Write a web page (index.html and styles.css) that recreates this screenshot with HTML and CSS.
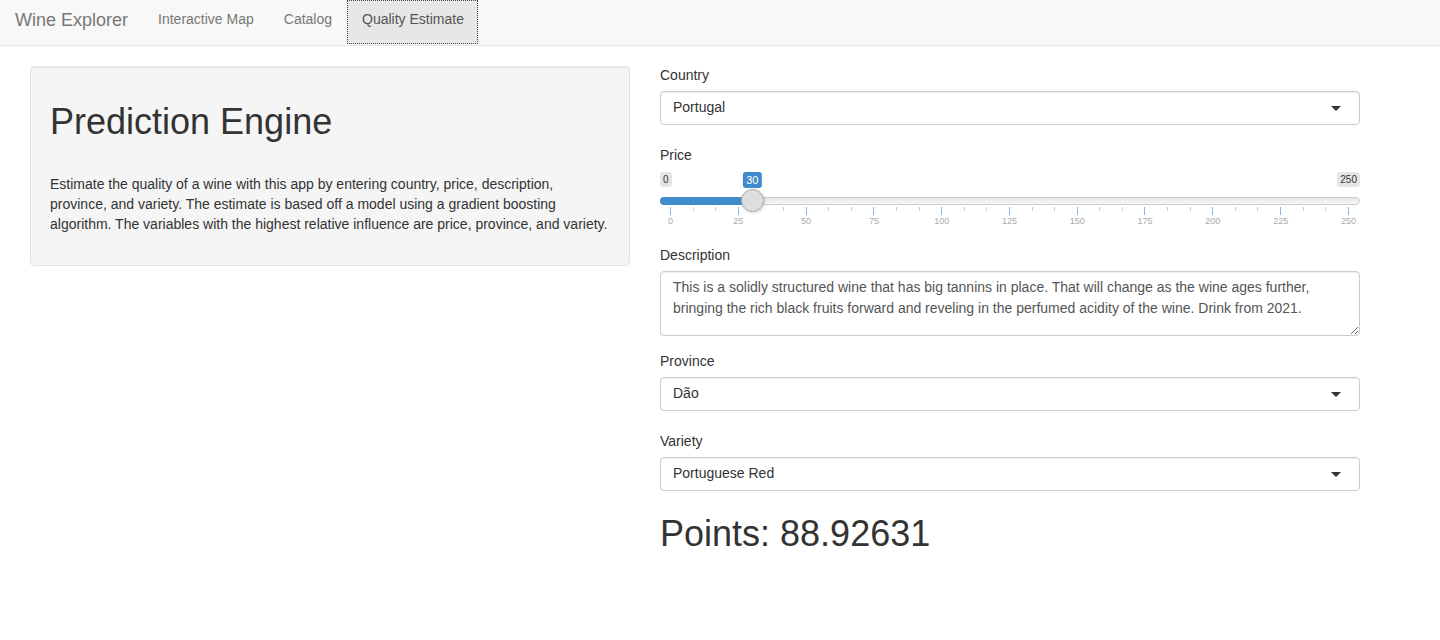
FILE: index.html
```html
<!DOCTYPE html>
<html lang="en">
<head>
<meta charset="utf-8">
<title>Wine Explorer</title>
<link rel="stylesheet" href="styles.css">
</head>
<body>
<nav class="navbar">
  <span class="brand">Wine Explorer</span>
  <ul class="nav">
    <li><a class="nav-link">Interactive Map</a></li>
    <li><a class="nav-link">Catalog</a></li>
    <li><a class="nav-link active">Quality Estimate</a></li>
  </ul>
</nav>
<main class="page">
  <section class="left">
    <div class="well">
      <h1 class="well-title">Prediction Engine</h1>
      <p class="well-text">Estimate the quality of a wine with this app by entering country, price, description, province, and variety. The estimate is based off a model using a gradient boosting algorithm. The variables with the highest relative influence are price, province, and variety.</p>
    </div>
  </section>
  <section class="right">
    <div class="form-group">
      <label class="control-label">Country</label>
      <div class="select"><span>Portugal</span><i class="caret"></i></div>
    </div>
    <div class="form-group">
      <label class="control-label">Price</label>
      <div class="irs">
        <span class="irs-min">0</span>
        <span class="irs-max">250</span>
        <span class="irs-line"></span>
        <span class="irs-bar" style="--p:0.12"></span>
        <span class="irs-single" style="--p:0.12">30</span>
        <span class="irs-handle" style="--p:0.12"></span>
        <div class="irs-grid">
          <div class="ticks">
            <i class="t major"></i><i class="t"></i><i class="t"></i>
            <i class="t major"></i><i class="t"></i><i class="t"></i>
            <i class="t major"></i><i class="t"></i><i class="t"></i>
            <i class="t major"></i><i class="t"></i><i class="t"></i>
            <i class="t major"></i><i class="t"></i><i class="t"></i>
            <i class="t major"></i><i class="t"></i><i class="t"></i>
            <i class="t major"></i><i class="t"></i><i class="t"></i>
            <i class="t major"></i><i class="t"></i><i class="t"></i>
            <i class="t major"></i><i class="t"></i><i class="t"></i>
            <i class="t major"></i><i class="t"></i><i class="t"></i>
            <i class="t major"></i>
          </div>
          <div class="grid-labels">
            <span class="gl"><span>0</span></span>
            <span class="gl"><span>25</span></span>
            <span class="gl"><span>50</span></span>
            <span class="gl"><span>75</span></span>
            <span class="gl"><span>100</span></span>
            <span class="gl"><span>125</span></span>
            <span class="gl"><span>150</span></span>
            <span class="gl"><span>175</span></span>
            <span class="gl"><span>200</span></span>
            <span class="gl"><span>225</span></span>
            <span class="gl"><span>250</span></span>
          </div>
        </div>
      </div>
    </div>
    <div class="form-group fg-text">
      <label class="control-label">Description</label>
      <textarea class="textarea">This is a solidly structured wine that has big tannins in place. That will change as the wine ages further, bringing the rich black fruits forward and reveling in the perfumed acidity of the wine. Drink from 2021.</textarea>
    </div>
    <div class="form-group">
      <label class="control-label">Province</label>
      <div class="select"><span>Dão</span><i class="caret"></i></div>
    </div>
    <div class="form-group">
      <label class="control-label">Variety</label>
      <div class="select"><span>Portuguese Red</span><i class="caret"></i></div>
    </div>
    <h1 class="points">Points: 88.92631</h1>
  </section>
</main>
</body>
</html>
```

FILE: styles.css
```css
* { box-sizing: border-box; }
html, body { margin: 0; padding: 0; }
body {
  font-family: "Liberation Sans", Arial, Helvetica, sans-serif;
  font-size: 14px;
  line-height: 20px;
  color: #333;
  background: #fff;
}

/* navbar */
.navbar {
  display: flex;
  align-items: flex-start;
  height: 46px;
  background: #f8f8f8;
  border-bottom: 1px solid #e7e7e7;
}
.brand {
  font-size: 18px;
  line-height: 20px;
  color: #777;
  padding: 10px 15px 15px 15px;
}
.nav {
  display: flex;
  list-style: none;
  margin: 0;
  padding: 0;
}
.nav-link {
  display: block;
  height: 45px;
  padding: 9px 15px 16px 15px;
  color: #777;
  text-decoration: none;
}
.nav-link.active {
  background: #e7e7e7;
  color: #555;
  outline: 1px dotted #444;
  outline-offset: -1px;
  height: 44px;
  padding-right: 14px;
}

/* layout */
.page {
  display: flex;
  align-items: flex-start;
  padding: 19px 0 0 30px;
  gap: 30px;
}
.left { width: 600px; flex: none; padding-top: 1px; }
.right { width: 700px; flex: none; }

/* well */
.well {
  background: #f5f5f5;
  border: 1px solid #e3e3e3;
  border-radius: 4px;
  box-shadow: inset 0 1px 1px rgba(0,0,0,0.05);
  padding: 19px;
}
.well-title {
  font-size: 36px;
  font-weight: 500;
  line-height: 1.1;
  margin: 16px 0 0 0;
}
.well-title, .points { font-family: "Liberation Sans", Arial, sans-serif; }
.well-text {
  margin: 32px 0 12px 0;
}

/* form */
.form-group { margin-bottom: 20px; }
.fg-text { margin-bottom: 15px; }
.control-label {
  display: block;
  font-weight: 400;
  margin-bottom: 6px;
}
.select {
  position: relative;
  height: 34px;
  border: 1px solid #ccc;
  border-radius: 4px;
  padding: 5px 12px 7px 12px;
  background: #fff;
  box-shadow: inset 0 1px 1px rgba(0,0,0,0.075);
  color: #333;
}
.caret {
  position: absolute;
  right: 18px;
  top: 14px;
  width: 0;
  height: 0;
  border-style: solid;
  border-width: 5px 5px 0 5px;
  border-color: #333 transparent transparent transparent;
}
.textarea {
  display: block;
  width: 100%;
  height: 65px;
  margin-top: 1px;
  border: 1px solid #ccc;
  border-radius: 4px;
  padding: 5px 12px;
  font-family: "Liberation Sans", Arial, sans-serif;
  font-size: 14px;
  line-height: 21px;
  color: #555;
  resize: vertical;
  box-shadow: inset 0 1px 1px rgba(0,0,0,0.075);
  overflow: hidden;
}

/* slider */
.irs {
  position: relative;
  height: 54px;
  font-family: "Liberation Sans", Arial, sans-serif;
}
.irs-min, .irs-max {
  position: absolute;
  top: 1px;
  font-size: 10px;
  line-height: 13px;
  padding: 1px 3px;
  border-radius: 3px;
  background: rgba(0,0,0,0.1);
  color: #333;
}
.irs-min { left: 0; }
.irs-max { right: 0; }
.irs-line {
  position: absolute;
  left: 0;
  right: 0;
  top: 26px;
  height: 8px;
  border: 1px solid #ccc;
  border-radius: 16px;
  background: linear-gradient(to bottom, #dedede -50%, #fff 150%);
}
.irs-bar {
  position: absolute;
  left: 0;
  top: 26px;
  height: 8px;
  width: calc(11px + (100% - 22px) * var(--p));
  background: #428bca;
  border-radius: 16px 0 0 16px;
}
.irs-single {
  position: absolute;
  top: 1px;
  left: calc(11px + (100% - 22px) * var(--p));
  transform: translateX(-50%);
  font-size: 11px;
  line-height: 14px;
  padding: 1px 3px;
  border-radius: 3px;
  background: #428bca;
  color: #fff;
}
.irs-handle {
  position: absolute;
  top: 18px;
  left: calc(11px + (100% - 22px) * var(--p));
  width: 23px;
  height: 23px;
  margin-left: -11.5px;
  border-radius: 50%;
  background: #dedede;
  border: 1px solid #ababab;
  box-shadow: 1px 1px 3px rgba(0,0,0,0.15);
}
.irs-grid {
  position: absolute;
  left: 10px;
  right: 11px;
  top: 36px;
}
.ticks {
  display: flex;
  justify-content: space-between;
  align-items: flex-start;
  height: 8px;
}
.t {
  display: block;
  width: 1px;
  height: 4px;
  background: #ccc;
}
.t.major {
  height: 8px;
  background: #8db6de;
}
.grid-labels {
  display: flex;
  justify-content: space-between;
  margin-top: 1px;
}
.gl {
  width: 1px;
  display: flex;
  justify-content: center;
  font-size: 9px;
  line-height: 11px;
  color: #a9a9a9;
  white-space: nowrap;
}

.points {
  font-size: 36px;
  font-weight: 500;
  line-height: 1.1;
  margin: 23px 0 10px 0;
}
```
